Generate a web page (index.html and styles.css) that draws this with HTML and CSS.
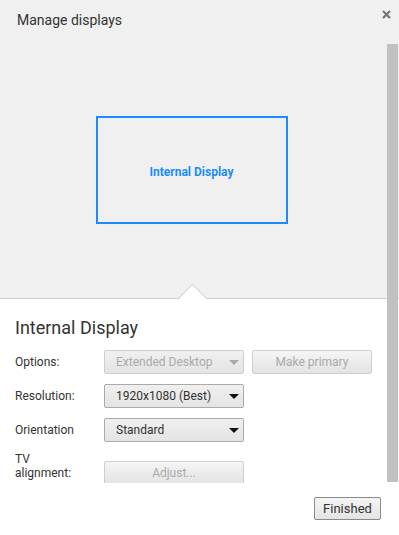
FILE: index.html
```html
<!DOCTYPE html>
<html lang="en">
<head>
  <meta charset="UTF-8" />
  <title>Manage displays</title>
  <link rel="stylesheet" href="styles.css">
</head>
<body>
  <div class="dialog">
    <div class="header">
      <h1 class="title">Manage displays</h1>
      <button class="close" title="Close">
        <svg width="9" height="9" viewBox="0 0 9 9"><path d="M1 1L8 8M8 1L1 8" stroke="#777" stroke-width="2.2"/></svg>
      </button>
    </div>

    <div class="body">
      <div class="scroll">
        <div class="layout">
          <div class="display-box">Internal Display</div>
        </div>
        <div class="details">
          <span class="notch"></span>
          <h2 class="display-name">Internal Display</h2>

          <div class="row">
            <span class="label">Options:</span>
            <div class="select disabled">Extended Desktop<span class="arrow"></span></div>
            <button class="btn wide" disabled>Make primary</button>
          </div>
          <div class="row">
            <span class="label">Resolution:</span>
            <div class="select">1920x1080 (Best)<span class="arrow"></span></div>
          </div>
          <div class="row">
            <span class="label">Orientation</span>
            <div class="select">Standard<span class="arrow"></span></div>
          </div>
          <div class="row tv">
            <span class="label">TV<br>alignment:</span>
            <button class="btn adjust" disabled>Adjust...</button>
          </div>
        </div>
      </div>
      <div class="thumb"></div>
    </div>

    <div class="footer">
      <button class="btn">Finished</button>
    </div>
  </div>
</body>
</html>
```

FILE: styles.css
```css
html, body {
  margin: 0;
  background: #fff;
  font-family: Roboto, "Liberation Sans", sans-serif;
  color: #333;
}
.dialog {
  width: 399px;
  height: 535px;
  display: flex;
  flex-direction: column;
}
.header {
  height: 44px;
  background: #f0f0f0;
  display: flex;
  justify-content: space-between;
  align-items: flex-start;
}
.title {
  margin: 10px 0 0 17px;
  font-size: 14px;
  font-weight: normal;
  line-height: 20px;
  color: #333;
}
.close {
  border: none;
  background: none;
  padding: 0;
  margin: 10px 8px 0 0;
  width: 9px;
  height: 9px;
  display: flex;
}
.body {
  position: relative;
  height: 439px;
}
.scroll {
  height: 439px;
  overflow: hidden;
}
.thumb {
  position: absolute;
  top: 0;
  right: 1px;
  width: 11px;
  height: 438px;
  background: #c1c1c1;
}
.layout {
  height: 251px;
  padding: 0 16px 3px 0;
  background: #f0f0f0;
  border-bottom: 1px solid #cdcdcd;
  display: flex;
  justify-content: center;
  align-items: center;
}
.display-box {
  width: 188px;
  height: 100px;
  padding-top: 4px;
  margin-top: 1px;
  border: 2px solid #1a8cff;
  display: flex;
  justify-content: center;
  align-items: center;
  color: #1a8cff;
  font-size: 12px;
  font-weight: bold;
}
.details {
  position: relative;
  padding: 0 0 0 15px;
}
.notch {
  position: absolute;
  left: 182px;
  top: -11px;
  width: 20px;
  height: 20px;
  background: #fff;
  border-left: 1px solid #cdcdcd;
  border-top: 1px solid #cdcdcd;
  transform: rotate(45deg);
}
.display-name {
  position: relative;
  margin: 0;
  padding: 18px 0 11px;
  font-size: 18px;
  font-weight: normal;
  line-height: 22px;
  color: #333;
}
.row {
  display: flex;
  align-items: center;
  margin-bottom: 10px;
  font-size: 12px;
}
.label {
  width: 89px;
  line-height: 14px;
}
.select {
  width: 115px;
  height: 22px;
  padding: 0 12px 0 11px;
  border: 1px solid #aaa;
  border-radius: 2px;
  background: linear-gradient(#f0f0f0, #e4e4e4);
  display: flex;
  align-items: center;
  justify-content: space-between;
  font-size: 12px;
  color: #333;
}
.arrow {
  width: 0;
  height: 0;
  margin-right: -8px;
  border-left: 5px solid transparent;
  border-right: 5px solid transparent;
  border-top: 5px solid #111;
}
.select.disabled {
  color: #aaa;
  border-color: #cfcfcf;
}
.select.disabled .arrow {
  border-top-color: #aaa;
}
.btn {
  height: 24px;
  padding: 0 10px;
  border: 1px solid #8a8a8a;
  border-radius: 2px;
  background: linear-gradient(#f5f5f5, #e3e3e3);
  font-family: Roboto, "Liberation Sans", sans-serif;
  font-size: 12px;
  color: #333;
}
.btn:disabled {
  color: #aaa;
  border-color: #cfcfcf;
}
.btn.wide {
  width: 120px;
  margin-left: 8px;
}
.tv {
  align-items: flex-start;
}
.btn.adjust {
  width: 140px;
  margin-top: 9px;
}
.footer {
  flex: 1;
  display: flex;
  justify-content: flex-end;
  align-items: flex-start;
  padding: 14px 18px 0 0;
}
.footer .btn {
  width: 67px;
  height: 23px;
  padding: 0;
  font-size: 13px;
}
```
